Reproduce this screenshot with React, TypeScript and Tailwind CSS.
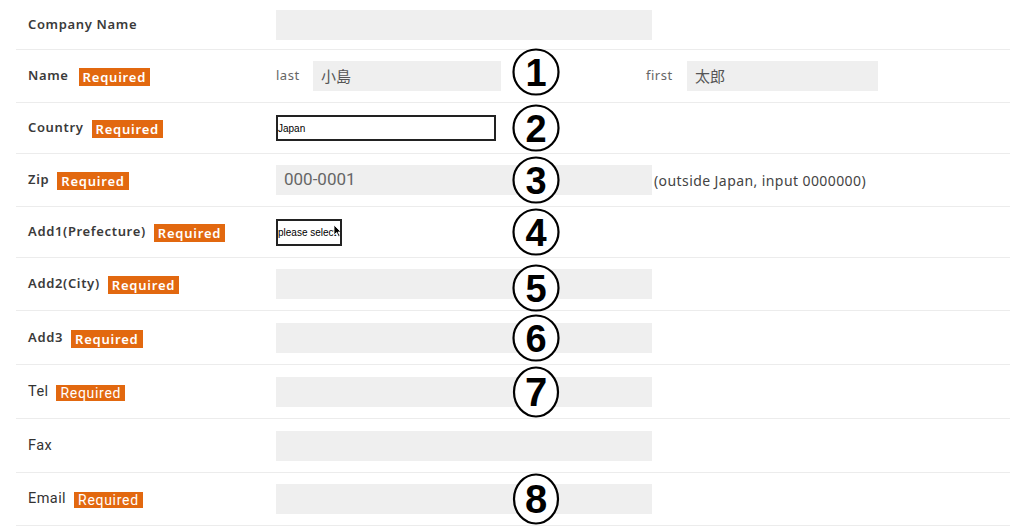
import React from 'react';

const labelFont = { fontFamily: '"Noto Sans", "Noto Sans CJK JP", sans-serif' };

type Row = {
    label: string;
    required?: boolean;
    light?: boolean;
    mark?: string;
    markY?: number;
    height: string;
    kind: 'input' | 'name' | 'country' | 'zip' | 'select';
};

const rows: Row[] = [
    { label: 'Company Name', height: 'h-[50px]', kind: 'input' },
    { label: 'Name', required: true, mark: '1', markY: -4, height: 'h-[53px]', kind: 'name' },
    { label: 'Country', required: true, mark: '2', height: 'h-[51px]', kind: 'country' },
    { label: 'Zip', required: true, mark: '3', height: 'h-[53px]', kind: 'zip' },
    { label: 'Add1(Prefecture)', required: true, mark: '4', height: 'h-[51px]', kind: 'select' },
    { label: 'Add2(City)', required: true, mark: '5', markY: 4, height: 'h-[53px]', kind: 'input' },
    { label: 'Add3', required: true, mark: '6', height: 'h-[54px]', kind: 'input' },
    { label: 'Tel', required: true, light: true, mark: '7', height: 'h-[54px]', kind: 'input' },
    { label: 'Fax', light: true, height: 'h-[54px]', kind: 'input' },
    { label: 'Email', required: true, light: true, mark: '8', height: 'h-[53px]', kind: 'input' },
];

function Badge({ light }: { light?: boolean }) {
    return (
        <span
            className={`bg-[#e2680f] text-white px-[4px] ${light ? 'text-[14px] leading-[16px] font-normal tracking-[0.05em]' : 'text-[13px] leading-[15px] font-semibold tracking-[0.06em]'}`}
            style={light ? { fontFamily: 'Roboto, sans-serif' } : labelFont}
        >
            Required
        </span>
    );
}

function Mark({ n, dy = 0, oval }: { n: string; dy?: number; oval?: boolean }) {
    return (
        <div
            className="absolute left-[496px] top-1/2 pointer-events-none"
            style={{ transform: `translateY(calc(-50% + ${dy}px))` }}
        >
            <svg width="48" height={oval ? 52 : 48} viewBox={oval ? '0 0 48 52' : '0 0 48 48'}>
                {oval ? (
                    <ellipse cx="24" cy="26" rx="22" ry="24.5" fill="white" stroke="black" strokeWidth="2.2" />
                ) : (
                    <circle cx="24" cy="24" r="22.5" fill="white" stroke="black" strokeWidth="2.2" />
                )}
                <text
                    x="24"
                    y={oval ? 40 : 38}
                    textAnchor="middle"
                    fontSize={oval ? 40 : 38}
                    fontWeight="900"
                    fontFamily='"Liberation Sans", Arial, sans-serif'
                    fill="black"
                >
                    {n}
                </text>
            </svg>
        </div>
    );
}

function Field({ kind }: { kind: Row['kind'] }) {
    if (kind === 'name') {
        return (
            <div className="flex items-center text-[13px] text-[#666]" style={labelFont}>
                <span className="w-[37px] tracking-[0.04em]">last</span>
                <div className="w-[188px] h-[30px] bg-[#efefef] flex items-center pl-[8px] text-[15px] text-[#555]" style={{ fontFamily: '"Noto Sans CJK JP", sans-serif' }}>
                    小島
                </div>
                <span className="ml-[145px] w-[41px] tracking-[0.04em]">first</span>
                <div className="w-[191px] h-[30px] bg-[#efefef] flex items-center pl-[8px] text-[15px] text-[#555]" style={{ fontFamily: '"Noto Sans CJK JP", sans-serif' }}>
                    太郎
                </div>
            </div>
        );
    }
    if (kind === 'country') {
        return (
            <div className="w-[220px] h-[26px] border-2 border-[#222] flex items-center text-[10px] text-black" style={{ fontFamily: '"Liberation Sans", sans-serif' }}>
                Japan
            </div>
        );
    }
    if (kind === 'select') {
        return (
            <div className="relative w-[66px] h-[27px] border-2 border-[#222] flex items-center overflow-hidden whitespace-nowrap text-[10px] text-black" style={{ fontFamily: '"Liberation Sans", sans-serif' }}>
                please select
                <svg className="absolute left-[55px] top-[3px]" width="9" height="13" viewBox="0 0 9 13">
                    <path d="M1 1 L1 11 L3.5 8.5 L5.5 12.5 L7 11.8 L5 8 L8 8 Z" fill="black" stroke="white" strokeWidth="0.8" />
                </svg>
            </div>
        );
    }
    if (kind === 'zip') {
        return (
            <div className="flex items-center">
                <div className="w-[376px] h-[30px] bg-[#efefef] flex items-center pl-[8px] text-[17px] text-[#666]" style={{ fontFamily: 'Roboto, sans-serif' }}>
                    000-0001
                </div>
                <span className="ml-[2px] text-[14px] text-[#444] tracking-[0.03em]" style={labelFont}>
                    (outside Japan, input 0000000)
                </span>
            </div>
        );
    }
    return <div className="w-[376px] h-[30px] bg-[#efefef]" />;
}

export default function App() {
    return (
        <div className="w-[1024px] h-[529px] bg-white overflow-hidden">
            <div className="ml-4 w-[994px]">
                {rows.map((row, i) => (
                    <div key={i} className={`relative flex items-center border-b border-[#ececec] ${row.height}`}>
                        <div className="w-[260px] pl-3 flex items-center gap-[8px]">
                            <span
                                className={row.light ? 'text-[14.5px] text-[#333] tracking-[0.03em]' : 'text-[13px] font-semibold text-[#3a3a3a] tracking-[0.05em]'}
                                style={row.light ? { fontFamily: 'Roboto, sans-serif' } : labelFont}
                            >
                                {row.label}
                            </span>
                            {row.required && <span className={row.kind === 'name' ? 'ml-[2px]' : ''}><Badge light={row.light} /></span>}
                        </div>
                        <Field kind={row.kind} />
                        {row.mark && <Mark n={row.mark} dy={row.markY} oval={row.light} />}
                    </div>
                ))}
            </div>
        </div>
    );
}
